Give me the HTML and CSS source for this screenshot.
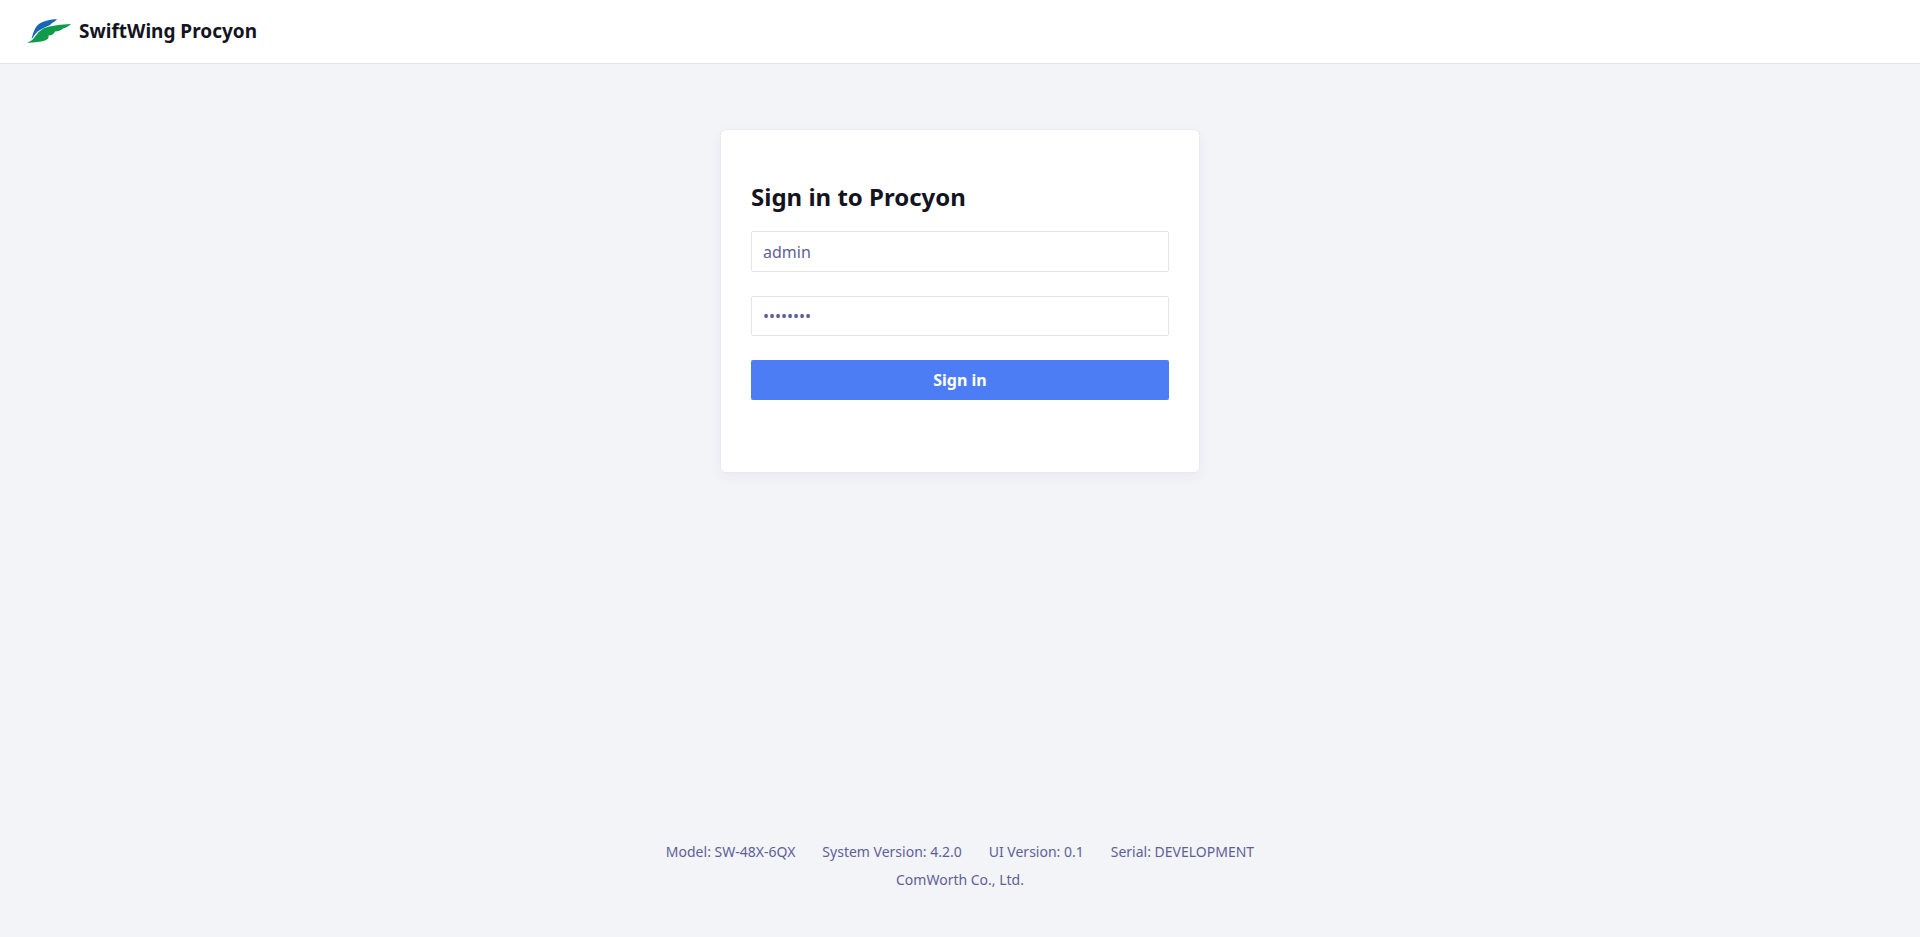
FILE: index.html
```html
<!DOCTYPE html>
<html lang="en">
<head>
  <meta name="viewport" content="width=device-width, initial-scale=1">
  <link rel="stylesheet" href="styles.css">
  <title>Sign in - SwiftWing Procyon</title>
</head>
<body>

<!-- Top Bar -->
<header class="topbar">
  <svg class="logo" viewBox="0 0 44 24" width="44" height="24" aria-hidden="true">
    <path fill="#1565b8" d="M30 0C24 .5 16 2 12 5C8 8 6 14 4.500 20.500C7 17 9 13 13 11C16 9 19 8 22 6.500L25 4.500L24 4.500C26 3.500 28.500 2 30 0Z"/>
    <path fill="#0f9a4c" d="M44 5C34 5.500 25 6.500 19 8.500C13 10.500 10 15 7 19C5.500 21 3 22.500 0 23.700C6 23.900 13 23 18 21.500C21 20.500 22 18.500 21.500 16.500C24.500 16.500 27 15 28 12.500C31 12.500 34 11.500 36 9.500C39 8.500 42 7 44 5Z"/>
  </svg>
  <span class="brand">SwiftWing Procyon</span>
</header>

<!-- Login Card -->
<main class="content">
  <div class="login-box">
    <h2>Sign in to Procyon</h2>
    <form class="login-form">
      <input type="text" name="uname" value="admin">
      <input type="password" name="psw" value="password">
      <button type="submit">Sign in</button>
    </form>
  </div>
</main>

<!-- Footer -->
<footer class="footer">
  <p class="footer-info">
    <span>Model: SW-48X-6QX</span>
    <span>System Version: 4.2.0</span>
    <span>UI Version: 0.1</span>
    <span>Serial: DEVELOPMENT</span>
  </p>
  <p class="footer-company">ComWorth Co., Ltd.</p>
</footer>

</body>
</html>
```

FILE: styles.css
```css
* {
  box-sizing: border-box;
}
body {
  font-family: "Noto Sans", Inter, sans-serif;
  background-color: #f2f4f8;
  color: #5f5f96;
  margin: 0;
  height: 100vh;
  display: flex;
  flex-direction: column;
}
.topbar {
  display: flex;
  align-items: center;
  gap: 8px;
  height: 64px;
  padding: 0 27px 1px;
  background-color: #fff;
  border-bottom: 1px solid #e3e5ec;
}
.brand {
  font-size: 19px;
  font-weight: 700;
  color: #14141f;
}
.content {
  flex: 1;
  display: flex;
  justify-content: center;
  align-items: flex-start;
  padding-top: 65px;
}
.login-box {
  width: 480px;
  height: 344px;
  padding: 52px 30px 0;
  background-color: #fff;
  border: 1px solid #e8eaf0;
  border-radius: 6px;
  box-shadow: 0 4px 12px rgba(30, 50, 90, 0.05);
}
.login-box h2 {
  margin: 0 0 20.4px;
  font-size: 24px;
  line-height: 29px;
  font-weight: 700;
  color: #14141f;
}
.login-form {
  display: flex;
  flex-direction: column;
}
.login-form input {
  width: 100%;
  height: 40.4px;
  padding: 0 11px;
  margin-bottom: 24px;
  background-color: #fff;
  border: 1px solid #e3e5ee;
  border-radius: 2px;
  font-family: inherit;
  font-size: 16px;
  color: #5f5f96;
  outline: none;
}
.login-form button {
  height: 40px;
  background-color: #4c7df4;
  border: none;
  border-radius: 2px;
  font-family: inherit;
  font-size: 16px;
  font-weight: 700;
  color: #fff;
  cursor: pointer;
}
.footer {
  padding-bottom: 43px;
  text-align: center;
  font-size: 14px;
  line-height: 28px;
}
.footer p {
  margin: 0;
}
.footer-info {
  display: flex;
  justify-content: center;
  gap: 27px;
}
```
